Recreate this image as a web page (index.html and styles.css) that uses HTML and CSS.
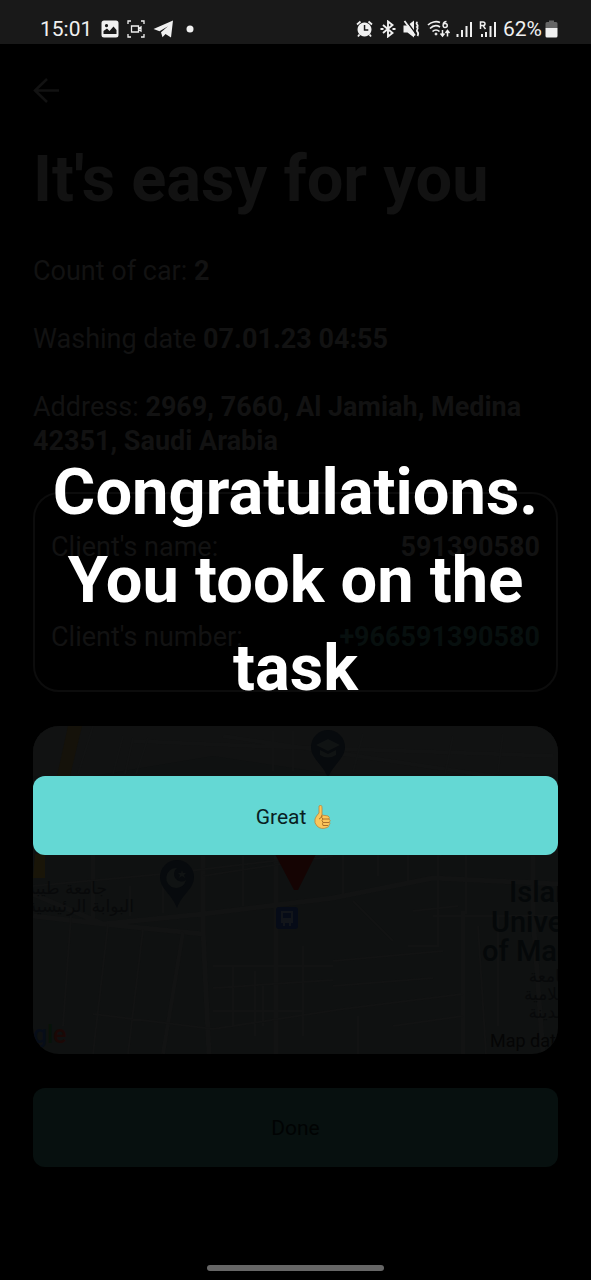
FILE: index.html
```
<!DOCTYPE html>
<html lang="en">
<head>
<meta charset="utf-8">
<meta name="viewport" content="width=device-width, initial-scale=1">
<title>Task details</title>
<link rel="stylesheet" href="styles.css">
</head>
<body>
<div class="screen">
  <header class="status">
    <div class="status-group status-left">
      <span class="clock">15:01</span>
      <svg class="icon" width="18" height="18" viewBox="0 0 18 18"><path fill="currentColor" fill-rule="evenodd" d="M3 .5h12A2.500 2.500 0 0 1 17.500 3v12a2.500 2.500 0 0 1-2.500 2.500H3A2.500 2.500 0 0 1 .5 15V3A2.500 2.500 0 0 1 3 .5ZM2.500 11v3h13v-4l-3-3.500L8.500 11 6 8.500ZM5.500 4a1.600 1.600 0 1 0 .01 0Z"/></svg>
      <svg class="icon" width="18" height="18" viewBox="0 0 18 18" fill="none" stroke="currentColor" stroke-width="1.300"><path d="M1 4V1h3M14 1h3v3M17 14v3h-3M4 17H1v-3M4.500 6h7v6h-7ZM11.500 8.500 14 7v4l-2.500-1.500"/></svg>
      <svg class="icon" width="21" height="18" viewBox="0 0 21 18"><path fill="currentColor" d="M.5 9 20 .5l-2 17-5.500-3.500-3 3.200-1.500-5 7-6-8.500 5Z"/></svg>
      <svg class="icon dot" width="8" height="18" viewBox="0 0 8 18"><circle cx="4" cy="9" r="3.500" fill="currentColor"/></svg>
    </div>
    <div class="status-group status-right">
      <svg class="icon" width="17" height="18" viewBox="0 0 17 18"><path fill="currentColor" fill-rule="evenodd" d="M8.500 2.500a7 7 0 1 0 .01 0ZM7.800 5h1.500v4.300h3v1.500H7.800Z"/><path d="M1 4.500 4.500 1.500M16 4.500l-3.500-3M3.500 14.500 2 16.500M13.500 14.500l1.500 2" stroke="currentColor" stroke-width="1.800"/></svg>
      <svg class="icon" width="16" height="18" viewBox="0 0 16 18" fill="none" stroke="currentColor" stroke-width="1.900"><path d="M3 5l9.500 8L8 16.500v-15L12.500 5 3 13"/><path d="M.5 9h3M12.500 9h3"/></svg>
      <svg class="icon" width="17" height="18" viewBox="0 0 17 18"><path fill="currentColor" d="M.5 5.500h4l6.500-5v17l-6.500-5h-4Z"/><path d="M3 .5 13 14" stroke="#191919" stroke-width="1.500"/><path d="M1.500 1 12 15.500M14.500 2c-3 2 2 3-.5 5 2.500 2-2 3 .5 5 1 1 1 2 0 4" fill="none" stroke="currentColor" stroke-width="1.800"/></svg>
      <svg class="icon wifi" width="24" height="18" viewBox="0 0 24 18" fill="none" stroke="currentColor" stroke-width="1.700"><path d="M1 5C4 2 9 .8 13 2.500M3 8.500c3-3 7-3.300 10-1.500M5.500 11.500c2-2 5-2 7 0"/><circle cx="9" cy="14" r="1" fill="currentColor" stroke-width="1"/><path d="M19.500 1.500c-4 0-4.500 6-1.500 6 3 0 3-4 0-4-1 0-1.800.5-2 1.500M15.500 10v6M13.500 13.500l2 2.500 2-2.500M20.500 16.500v-6M18.500 13l2-2.500 2 2.500" stroke-width="1.500"/></svg>
      <svg class="icon" width="16" height="18" viewBox="0 0 16 18" stroke="currentColor" stroke-width="2"><path d="M1.500 14v3M6 10v7M10.500 6v11M15 2v15"/></svg>
      <svg class="icon" width="17" height="18" viewBox="0 0 17 18" fill="none" stroke="currentColor" stroke-width="2"><path d="M3 14v3M7 12v5M11.500 6v11M16 2v15"/><path d="M1.500 9V2H4q2 0 2 1.800T4 5.600H1.500M4 5.600 6.500 9" stroke-width="1.500"/></svg>
      <span class="clock">62%</span>
      <svg class="icon battery" width="13" height="18" viewBox="0 0 13 18"><path fill="#666" d="M4 .5h5V2h2q1.500 0 1.500 1.500V8H.5V3.500Q.5 2 2 2h2Z"/><path fill="currentColor" d="M.5 8h12v8q0 1.500-1.500 1.500H2Q.5 17.500.5 16Z"/></svg>
    </div>
  </header>

  <main class="page">
    <button class="back" aria-label="Back"><svg width="28" height="26" viewBox="0 0 28 26" fill="none" stroke="currentColor" stroke-width="2.500"><path d="M26 12.500H3M14 1 2 12.500 14 24"/></svg></button>
    <h1 class="title">It's easy for you</h1>
    <div class="details">
      <p>Count of car: <b>2</b></p>
      <p>Washing date <b>07.01.23 04:55</b></p>
      <p>Address: <b>2969, 7660, Al Jamiah, Medina 42351, Saudi Arabia</b></p>
      <dl class="client">
        <div class="row"><dt>Client's name:</dt><dd>591390580</dd></div>
        <div class="row"><dt>Client's number:</dt><dd><a class="phone" href="tel:+966591390580">+966591390580</a></dd></div>
      </dl>
      <svg class="map" viewBox="0 0 525 328" preserveAspectRatio="xMidYMid slice" role="img" aria-label="Map">
        <rect width="525" height="328" fill="#0f1111"/>
        <path d="M0 0h525v48H300L180 30 60 50H0Z" fill="#111212"/>
        <g fill="none" stroke="#121313" stroke-width="2">
          <path stroke-width="5" d="M0 190 70 198l100-10 130-16 100-20 125 6M0 168l70 30 100 10M170 130v74l6 124M243 130v198M500 130v60l10 138"/>
          <path stroke-width="4" d="M150 206 130 328M190 10 525 60M100 15l120 5 300 10M430 185v143M60 128v64"/>
          <path d="M75 198 60 328M110 203 95 328M38 190 30 300M60 288l120 15 130-20 120-15M170 150l130-20M210 130v50M130 155v32M97 160v30M0 160l130-12 170-20M180 240h120M180 262l120-8M180 285h90M200 240v60M222 245v65M270 220v90M300 235l110-10M300 260l100-8M310 170v-60M345 150V80M375 155v-45l30-5v55M375 220h30v-90l28-12v70M400 190h125M445 200l8 128M465 190v110M325 290v38M360 300l70-10M60 0 45 48M90 10 80 48M100 12 92 48M115 12l-12 36M240 5v40M260 5v40M330 8l-10 38M420 10l-8 38M470 8l-5 38M320 175l40 40M230 260v40M380 185l45-5"/>
        </g>
        <path d="M35 0h14L37 50H24Z" fill="#15120a"/>
        <path d="M2 128h10v24H0Z" fill="#191508"/>
        <g fill="#070a0d">
          <path d="M295 4a17 17 0 0 1 17 17c0 12-12 17-17 31-5-14-17-19-17-31a17 17 0 0 1 17-17Z"/>
          <path d="M144 134a17 17 0 0 1 17 17c0 12-12 17-17 31-5-14-17-19-17-31a17 17 0 0 1 17-17Z"/>
        </g>
        <path d="m283 19 12-6 12 6-12 6ZM287 24l8 4 8-4v5q-8 5-16 0Z" fill="#101313"/>
        <path d="M144 142a10 10 0 1 0 9 12 7 7 0 1 1-9-12Z" fill="#101313"/>
        <path d="m149 144 1 3h3l-2 2 1 3-3-2-3 2 1-3-2-2h3Z" fill="#101313"/>
        <path d="M242 128h41l-18 36h-4Z" fill="#150403"/>
        <rect x="243" y="181" width="22" height="22" rx="3" fill="#060b17"/>
        <path d="M248 185h12v12h-2v3h-2v-3h-4v3h-2v-3h-2Zm2 2v5h8v-5Z" fill="#12151a"/>
        <g class="arabic" direction="rtl">
          <text x="74" y="168">جامعة طيبة</text>
          <text x="101" y="186">البوابة الرئيسية</text>
        </g>
        <g class="arabic" text-anchor="middle">
          <text x="522" y="256">الجامعة</text>
          <text x="522" y="274">الإسلامية</text>
          <text x="522" y="292">بالمدينة</text>
        </g>
        <g class="place">
          <text x="476" y="176">Islamic</text>
          <text x="458" y="206">University</text>
          <text x="449" y="235">of Madinah</text>
        </g>
        <text class="credit" x="457" y="321">Map data</text>
        <g class="brand"><text x="0" y="317" fill="#070d18">g</text><text x="14" y="317" fill="#071309">l</text><text x="20" y="317" fill="#1b0806">e</text></g>
      </svg>
      <button class="button done">Done</button>
    </div>
  </main>

  <footer class="home"><span class="home-bar"></span></footer>

  <section class="dialog" role="dialog" aria-labelledby="dialog-title">
    <h2 class="title dialog-title" id="dialog-title">Congratulations. You took on the task</h2>
    <button class="button great">Great
      <svg width="21" height="24" viewBox="0 0 21 24" role="img" aria-label="thumbs up"><path d="M5 1Q8-1 8 3v7l6 1q2 1 1 3 2 1 .5 3 1 2-.5 3 0 2-2 2.500Q7 25 3 21 0 18 1 14q1-3 4-6Z" fill="#fbc65b" stroke="#bd8437" stroke-width=".8"/><path d="M8 10q-1 4-3 4M9 14h6M9 17.500h6M9 20.500h5M8 11q-1 2 1 3-2 1 0 3.500-1 1 0 3" fill="none" stroke="#a9702c" stroke-width="1"/></svg>
    </button>
  </section>
</div>
</body>
</html>
```
FILE: styles.css
```
* { box-sizing: border-box; }

body {
  margin: 0;
  background: #000;
  color: #121212;
  font-family: Roboto, "Noto Sans", sans-serif;
}

h1, h2, p, dl, dd { margin: 0; }

button {
  border: 0;
  background: none;
  font: inherit;
  cursor: pointer;
}

.screen {
  position: relative;
  display: flex;
  flex-direction: column;
  min-height: 100vh;
}

.status {
  display: flex;
  justify-content: space-between;
  height: 44px;
  padding: 14px 33px 0 40px;
  background: #191919;
  color: #f0f0f0;
}

.status-group {
  display: flex;
  align-items: center;
  height: 30px;
}

.status-left { gap: 8px; }
.status-right { gap: 7px; }

.clock {
  font-size: 21px;
  line-height: 30px;
}

.status-left .clock { margin-right: 1px; }
.dot { margin-left: 4px; }
.wifi { margin-right: -2px; }
.battery { margin-left: -4px; }
.icon { flex: none; }

.page {
  flex: 1;
  padding: 32px 33px 0;
}

.back {
  display: block;
  height: 30px;
  padding: 0;
  color: #121212;
}

.back svg { display: block; }

.title {
  margin-top: 29px;
  font-size: 65px;
  line-height: 88px;
  font-weight: 700;
}

.details {
  display: flex;
  flex-direction: column;
  gap: 34px;
  margin-top: 31px;
  font-size: 27px;
  line-height: 34px;
}

.client {
  display: flex;
  flex-direction: column;
  gap: 56px;
  padding: 36px 16px;
  border: 2px solid #0c0c0c;
  border-radius: 26px;
}

.row {
  display: flex;
  justify-content: space-between;
}

.row dd { font-weight: 700; }

.phone {
  color: #070f0e;
  text-decoration: none;
}

.map {
  display: block;
  width: 100%;
  border-radius: 26px;
}

.arabic {
  fill: #08090a;
  font-family: "DejaVu Sans", sans-serif;
  font-size: 17px;
}

.place {
  fill: #050809;
  font-size: 29px;
  font-weight: 500;
}

.credit {
  fill: #050505;
  font-size: 18px;
}

.brand {
  font-size: 25px;
  font-weight: 500;
}

.button {
  display: flex;
  align-items: center;
  justify-content: center;
  gap: 8px;
  width: 100%;
  height: 79px;
  border-radius: 12px;
  font-size: 21px;
  line-height: 28px;
}

.done {
  background: #07100f;
  color: #010303;
}

.great {
  padding-top: 4px;
  background: #64d8d4;
  color: #09201f;
}

.home {
  display: flex;
  justify-content: center;
  padding: 7px 0 9px;
}

.home-bar {
  width: 30%;
  height: 6px;
  border-radius: 3px;
  background: #666;
}

.dialog {
  position: absolute;
  inset: 44px 0 22px;
  display: flex;
  flex-direction: column;
  justify-content: center;
  gap: 64px;
  padding: 0 33px;
}

.dialog-title {
  margin: 0;
  color: #fff;
  text-align: center;
}
```
